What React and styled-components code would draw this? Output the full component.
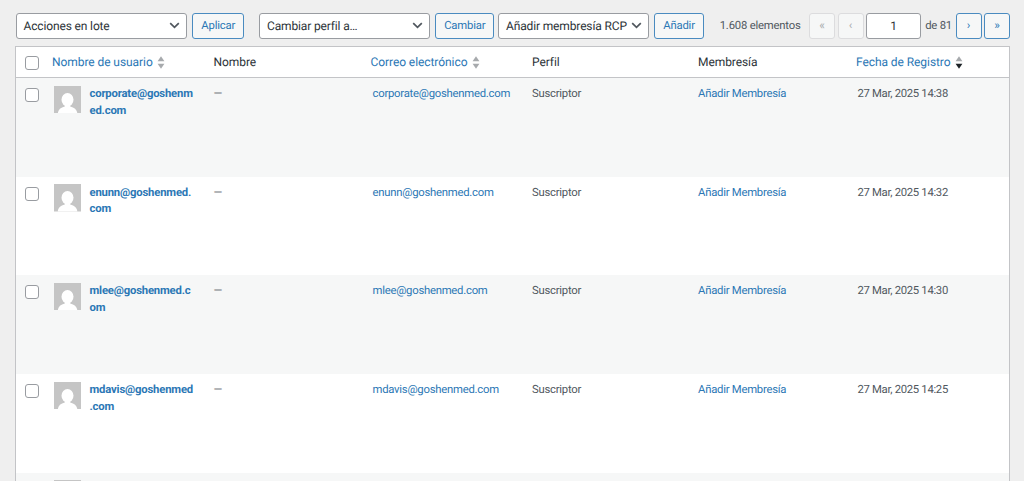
import React from 'react';
import styled, { createGlobalStyle } from 'styled-components';

const colors = {
  link: '#2b77b5',
  border: '#c3c4c7',
  control: '#999ca1',
  text: '#2c3338',
  muted: '#50575e',
};

const GlobalStyle = createGlobalStyle`
  * {
    box-sizing: border-box;
  }

  body {
    background: #efefef;
    color: ${colors.text};
    font-family: Roboto, sans-serif;
    font-size: 11.3px;
    height: 481px;
    letter-spacing: -0.24px;
    margin: 0;
    overflow: hidden;
    text-rendering: geometricPrecision;
  }

  button,
  input {
    text-rendering: inherit;
  }

  a {
    color: ${colors.link};
    text-decoration: none;
  }
`;

const Page = styled.main`
  height: 481px;
  overflow: hidden;
  padding: 12.5px 14px 0 15px;
`;

const Toolbar = styled.div`
  align-items: center;
  display: flex;
  height: 26px;
  margin-bottom: 7.5px;
  padding-left: 0.5px;
`;

const SelectBox = styled.div`
  align-items: center;
  background: #fff;
  border: 1px solid ${colors.control};
  border-radius: 3px;
  display: flex;
  flex: none;
  font-size: 12px;
  height: 26px;
  justify-content: space-between;
  letter-spacing: -0.14px;
  margin-right: 4.5px;
  padding: 0 6px 0 7px;
  white-space: nowrap;
  width: ${({ $width }) => $width}px;
`;

const Button = styled.button`
  background: #f6f7f7;
  border: 1px solid #4a8bc0;
  border-radius: 3px;
  color: ${colors.link};
  flex: none;
  font: 11.3px Roboto, sans-serif;
  height: 26px;
  letter-spacing: -0.18px;
  margin-right: ${({ $gap }) => $gap}px;
  padding: 0 0 0 1px;
  width: ${({ $width }) => $width}px;
`;

const Pagination = styled.div`
  align-items: center;
  display: flex;
  flex: 1;
  justify-content: flex-end;
`;

const Count = styled.span`
  color: ${colors.muted};
  letter-spacing: -0.2px;
  margin-right: 8.5px;
  white-space: nowrap;
`;

const PageButton = styled(Button)`
  font-size: 12px;
  letter-spacing: 0;
  margin-right: 2.5px;
  padding: 0 0 1px;
  width: 26px;

  &:disabled {
    border-color: #dcdcde;
    color: #a7aaad;
  }

  &:last-child {
    margin-right: 0;
  }
`;

const PageInput = styled.input`
  background: #fff;
  border: 1px solid ${colors.control};
  border-radius: 3px;
  color: ${colors.text};
  font: 12px Roboto, sans-serif;
  height: 26px;
  padding: 0;
  text-align: center;
  width: 55px;
`;

const PageTotal = styled.span`
  color: ${colors.muted};
  letter-spacing: -0.2px;
  margin: 0 3.5px 0 4px;
  white-space: nowrap;
`;

const Table = styled.div`
  background: #fff;
  border: 1px solid ${colors.border};
`;

const Row = styled.div`
  display: grid;
  grid-template-columns: 36px 161.5px 157px 161.5px 166px 158px 1fr;
`;

const HeadRow = styled(Row)`
  border-bottom: 1px solid ${colors.border};
  font-size: 12px;
  height: 31px;
  letter-spacing: -0.07px;
`;

const BodyRow = styled(Row)`
  background: ${({ $striped }) => ($striped ? '#f6f7f7' : '#fff')};
  color: ${colors.muted};
  height: 98.7px;
  line-height: 16.8px;
`;

const HeadCell = styled.div`
  align-items: center;
  color: ${({ $sortable }) => ($sortable ? colors.link : colors.text)};
  display: flex;
  gap: 4.5px;
  padding-bottom: 1px;
  white-space: nowrap;

  svg {
    margin-top: 1px;
  }
`;

const Cell = styled.div`
  padding: 8px 0 0 ${({ $indent }) => $indent || 0}px;
  white-space: nowrap;
`;

const DateCell = styled(Cell)`
  letter-spacing: -0.31px;
`;

const CheckCell = styled.div`
  padding: ${({ $top }) => $top}px 0 0 9.4px;
`;

const Checkbox = styled.input.attrs({ type: 'checkbox' })`
  appearance: none;
  background: #fff;
  border: 1px solid ${colors.control};
  border-radius: 3px;
  display: block;
  height: 14px;
  margin: 0;
  width: 14px;
`;

const UserCell = styled.div`
  display: flex;
  gap: 9px;
  padding: 8px 0 0 1.5px;

  svg {
    flex: none;
    margin-top: -0.5px;
  }
`;

const UserName = styled.a`
  font-weight: 700;
  letter-spacing: -0.18px;
  overflow-wrap: break-word;
  width: 105.5px;
`;

const Chevron = () => (
  <svg width="11" height="11" viewBox="0 0 11 11" fill="none" stroke="#50575e" strokeWidth="1.7">
    <path d="M1.2 3.2 5.5 7.4 9.8 3.2" />
  </svg>
);

const SortIcon = ({ desc }) => (
  <svg width="8" height="13" viewBox="0 0 8 13">
    <path d="M4 .3 7.4 5.3H.6z" fill="#a7aaad" />
    <path d="M.6 7.7h6.8L4 12.7z" fill={desc ? '#1d2327' : '#a7aaad'} />
  </svg>
);

const Avatar = () => (
  <svg width="27" height="27.5" viewBox="0 0 27 27.5">
    <path fill="#c5c5c5" d="M0 0h27v27.5H0z" />
    <ellipse cx="13.5" cy="13.8" rx="6" ry="6.7" fill="#fff" />
    <path fill="#fff" d="M3.8 27.5c.3-3.9 2.7-6.1 7-7.1v-3h5.4v3c4.3 1 6.8 3.2 7.2 7.1z" />
  </svg>
);

const Select = ({ label, width }) => (
  <SelectBox $width={width}>
    {label}
    <Chevron />
  </SelectBox>
);

const columns = [
  { label: 'Nombre de usuario', sortable: true },
  { label: 'Nombre' },
  { label: 'Correo electrónico', sortable: true },
  { label: 'Perfil' },
  { label: 'Membresía' },
  { label: 'Fecha de Registro', sortable: true, desc: true },
];

const users = [
  { email: 'corporate@goshenmed.com', date: '27 Mar, 2025 14:38' },
  { email: 'enunn@goshenmed.com', date: '27 Mar, 2025 14:32' },
  { email: 'mlee@goshenmed.com', date: '27 Mar, 2025 14:30' },
  { email: 'mdavis@goshenmed.com', date: '27 Mar, 2025 14:25' },
];

const UserRow = ({ user, striped }) => (
  <BodyRow $striped={striped}>
    <CheckCell $top={10}><Checkbox /></CheckCell>
    <UserCell>
      <Avatar />
      <UserName href="#">{user.email}</UserName>
    </UserCell>
    <Cell>—</Cell>
    <Cell $indent={2}><a href="#">{user.email}</a></Cell>
    <Cell>Suscriptor</Cell>
    <Cell><a href="#">Añadir Membresía</a></Cell>
    <DateCell $indent={1.5}>{user.date}</DateCell>
  </BodyRow>
);

const App = () => (
  <>
    <GlobalStyle />
    <Page>
      <Toolbar>
        <Select label="Acciones en lote" width={171.5} />
        <Button $width={52.5} $gap={15}>Aplicar</Button>
        <Select label="Cambiar perfil a…" width={171} />
        <Button $width={59.5} $gap={4}>Cambiar</Button>
        <Select label="Añadir membresía RCP" width={151} />
        <Button $width={50} $gap={0}>Añadir</Button>
        <Pagination>
          <Count>1.608 elementos</Count>
          <PageButton disabled>«</PageButton>
          <PageButton disabled>‹</PageButton>
          <PageInput defaultValue="1" />
          <PageTotal>de 81</PageTotal>
          <PageButton>›</PageButton>
          <PageButton>»</PageButton>
        </Pagination>
      </Toolbar>
      <Table>
        <HeadRow>
          <CheckCell $top={9}><Checkbox /></CheckCell>
          {columns.map(column => (
            <HeadCell key={column.label} $sortable={column.sortable}>
              {column.label}
              {column.sortable && <SortIcon desc={column.desc} />}
            </HeadCell>
          ))}
        </HeadRow>
        {users.map((user, index) => (
          <UserRow key={user.email} user={user} striped={index % 2 === 0} />
        ))}
        <BodyRow $striped>
          <CheckCell $top={10}><Checkbox /></CheckCell>
          <UserCell><Avatar /></UserCell>
        </BodyRow>
      </Table>
    </Page>
  </>
);

export default App;
